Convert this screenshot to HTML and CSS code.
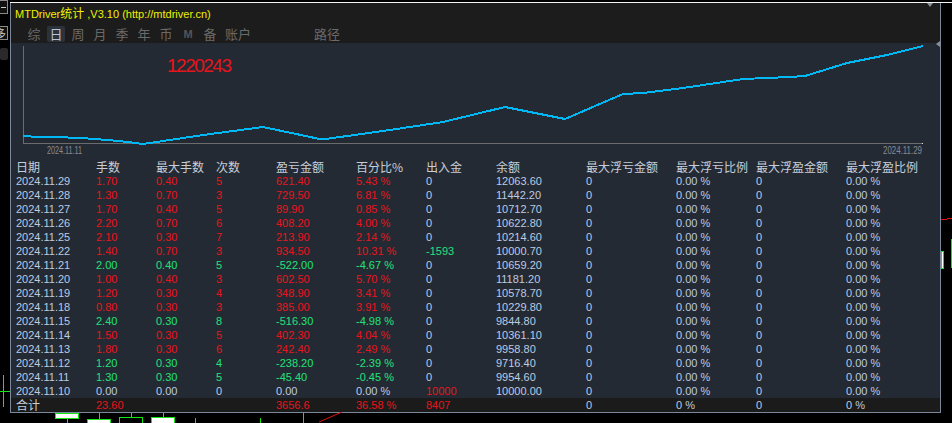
FILE: index.html
```html
<!DOCTYPE html>
<html>
<head>
<meta charset="utf-8">
<link rel="stylesheet" href="styles.css">
</head>
<body>
<div class="topline"></div>
<div class="panel">
  <div class="titlebar">
    <div class="title">MTDriver<span class="title-cjk">统计</span> ,V3.10 (http://mtdriver.cn)</div>
    <div class="tabs">
      <span class="tab">综</span><span class="tab active">日</span><span class="tab">周</span><span class="tab">月</span><span class="tab">季</span><span class="tab">年</span><span class="tab">币</span><span class="tab tab-m">M</span><span class="tab">备</span><span class="tab tab-wide">账户</span><span class="tab tab-wide tab-path">路径</span>
    </div>
  </div>
  <div class="content">
    <svg class="chart" width="929" height="117" viewBox="0 0 929 117">
      <line x1="12.5" y1="3" x2="12.5" y2="100" stroke="#6c6c6c" stroke-width="1"/>
      <line x1="12" y1="100.5" x2="912" y2="100.5" stroke="#6c6c6c" stroke-width="1"/>
      <rect x="911" y="100" width="1" height="1" fill="#e0e0e0"/>
      <text x="156" y="29" class="chart-num">1220243</text>
      <polyline fill="none" stroke="#00b8f4" stroke-width="2" stroke-linejoin="round"
        points="12,93 27,94 57,94.5 77,95.5 97,97 117,99 132,101 192,92 252,84 311,96.5 372,88 432,79 494,64 554,76 612,51 632,50 672,45 732,36 779,34 794,33 836,20 876,12 912,3"/>
      <text x="36" y="111" class="chart-date" textLength="35" lengthAdjust="spacingAndGlyphs">2024.11.11</text>
      <text x="872" y="111" class="chart-date" textLength="39" lengthAdjust="spacingAndGlyphs">2024.11.29</text>
    </svg>
    <div class="table">
      <div class="row head"><span>日期</span><span>手数</span><span>最大手数</span><span>次数</span><span>盈亏金额</span><span>百分比%</span><span>出入金</span><span>余额</span><span>最大浮亏金额</span><span>最大浮亏比例</span><span>最大浮盈金额</span><span>最大浮盈比例</span></div>
      <div class="row"><span>2024.11.29</span><span class="r">1.70</span><span class="r">0.40</span><span class="r">5</span><span class="r">621.40</span><span class="r">5.43 %</span><span>0</span><span>12063.60</span><span>0</span><span>0.00 %</span><span>0</span><span>0.00 %</span></div>
      <div class="row"><span>2024.11.28</span><span class="r">1.30</span><span class="r">0.70</span><span class="r">3</span><span class="r">729.50</span><span class="r">6.81 %</span><span>0</span><span>11442.20</span><span>0</span><span>0.00 %</span><span>0</span><span>0.00 %</span></div>
      <div class="row"><span>2024.11.27</span><span class="r">1.70</span><span class="r">0.40</span><span class="r">5</span><span class="r">89.90</span><span class="r">0.85 %</span><span>0</span><span>10712.70</span><span>0</span><span>0.00 %</span><span>0</span><span>0.00 %</span></div>
      <div class="row"><span>2024.11.26</span><span class="r">2.20</span><span class="r">0.70</span><span class="r">6</span><span class="r">408.20</span><span class="r">4.00 %</span><span>0</span><span>10622.80</span><span>0</span><span>0.00 %</span><span>0</span><span>0.00 %</span></div>
      <div class="row"><span>2024.11.25</span><span class="r">2.10</span><span class="r">0.30</span><span class="r">7</span><span class="r">213.90</span><span class="r">2.14 %</span><span>0</span><span>10214.60</span><span>0</span><span>0.00 %</span><span>0</span><span>0.00 %</span></div>
      <div class="row"><span>2024.11.22</span><span class="r">1.40</span><span class="r">0.70</span><span class="r">3</span><span class="r">934.50</span><span class="r">10.31 %</span><span class="g">-1593</span><span>10000.70</span><span>0</span><span>0.00 %</span><span>0</span><span>0.00 %</span></div>
      <div class="row"><span>2024.11.21</span><span class="g">2.00</span><span class="g">0.40</span><span class="g">5</span><span class="g">-522.00</span><span class="g">-4.67 %</span><span>0</span><span>10659.20</span><span>0</span><span>0.00 %</span><span>0</span><span>0.00 %</span></div>
      <div class="row"><span>2024.11.20</span><span class="r">1.00</span><span class="r">0.40</span><span class="r">3</span><span class="r">602.50</span><span class="r">5.70 %</span><span>0</span><span>11181.20</span><span>0</span><span>0.00 %</span><span>0</span><span>0.00 %</span></div>
      <div class="row"><span>2024.11.19</span><span class="r">1.20</span><span class="r">0.30</span><span class="r">4</span><span class="r">348.90</span><span class="r">3.41 %</span><span>0</span><span>10578.70</span><span>0</span><span>0.00 %</span><span>0</span><span>0.00 %</span></div>
      <div class="row"><span>2024.11.18</span><span class="r">0.80</span><span class="r">0.30</span><span class="r">3</span><span class="r">385.00</span><span class="r">3.91 %</span><span>0</span><span>10229.80</span><span>0</span><span>0.00 %</span><span>0</span><span>0.00 %</span></div>
      <div class="row"><span>2024.11.15</span><span class="g">2.40</span><span class="g">0.30</span><span class="g">8</span><span class="g">-516.30</span><span class="g">-4.98 %</span><span>0</span><span>9844.80</span><span>0</span><span>0.00 %</span><span>0</span><span>0.00 %</span></div>
      <div class="row"><span>2024.11.14</span><span class="r">1.50</span><span class="r">0.30</span><span class="r">5</span><span class="r">402.30</span><span class="r">4.04 %</span><span>0</span><span>10361.10</span><span>0</span><span>0.00 %</span><span>0</span><span>0.00 %</span></div>
      <div class="row"><span>2024.11.13</span><span class="r">1.80</span><span class="r">0.30</span><span class="r">6</span><span class="r">242.40</span><span class="r">2.49 %</span><span>0</span><span>9958.80</span><span>0</span><span>0.00 %</span><span>0</span><span>0.00 %</span></div>
      <div class="row"><span>2024.11.12</span><span class="g">1.20</span><span class="g">0.30</span><span class="g">4</span><span class="g">-238.20</span><span class="g">-2.39 %</span><span>0</span><span>9716.40</span><span>0</span><span>0.00 %</span><span>0</span><span>0.00 %</span></div>
      <div class="row"><span>2024.11.11</span><span class="g">1.30</span><span class="g">0.30</span><span class="g">5</span><span class="g">-45.40</span><span class="g">-0.45 %</span><span>0</span><span>9954.60</span><span>0</span><span>0.00 %</span><span>0</span><span>0.00 %</span></div>
      <div class="row"><span>2024.11.10</span><span>0.00</span><span>0.00</span><span>0</span><span>0.00</span><span>0.00 %</span><span class="r">10000</span><span>10000.00</span><span>0</span><span>0.00 %</span><span>0</span><span>0.00 %</span></div>
      <div class="row total"><span class="total-label">合计</span><span class="r">23.60</span><span></span><span></span><span class="r">3656.6</span><span class="r">36.58 %</span><span class="r">8407</span><span></span><span>0</span><span>0 %</span><span>0</span><span>0 %</span></div>
    </div>
  </div>
  <span class="tri-down"></span>
  <span class="tri-left"></span>
</div>

<div class="side-btn side-btn-1"><span class="dash"></span></div>
<div class="side-btn side-btn-2">多</div>
<div class="side-icon"></div>

<div class="bgc green-v" style="left:3px;top:375px;height:32px"></div>
<div class="bgc green-h" style="left:0;top:391px;width:10px"></div>
<div class="bgc red-h" style="left:941px;top:219px;width:6px"></div>
<div class="bgc red-h" style="left:947px;top:218px;width:5px"></div>
<div class="bgc candle" style="left:941px;top:251px;width:3px;height:18px"></div>
<div class="bgc green-v" style="left:951px;top:239px;height:29px"></div>

<div class="bgc candle" style="left:55px;top:413px;width:24px;height:6px"></div>
<div class="bgc green-v" style="left:67px;top:419px;height:4px"></div>
<div class="bgc green-v" style="left:99px;top:413px;height:6px"></div>
<div class="bgc candle" style="left:87px;top:419px;width:24px;height:6px"></div>
<div class="bgc green-v" style="left:131px;top:413px;height:4px"></div>
<div class="bgc candle-open" style="left:119px;top:417px;width:24px;height:8px"></div>
<div class="bgc green-v" style="left:163px;top:413px;height:4px"></div>
<div class="bgc candle" style="left:151px;top:417px;width:24px;height:8px"></div>
<div class="bgc green-v" style="left:195px;top:418px;height:5px"></div>
<div class="bgc green-v" style="left:260px;top:418px;height:5px"></div>
<div class="bgc green-v" style="left:303px;top:413px;height:10px"></div>
<svg class="bgc red-diag" width="30" height="12" viewBox="0 0 30 12"><line x1="0" y1="10" x2="23" y2="0" stroke="#e01010" stroke-width="1"/></svg>
</body>
</html>
```

FILE: styles.css
```css
* { box-sizing: border-box; }

html, body {
  margin: 0;
  padding: 0;
}

body {
  width: 952px;
  height: 423px;
  background: #000;
  overflow: hidden;
  position: relative;
  padding-top: 2px;
  font-family: "Liberation Sans", Arial, "Noto Sans CJK SC", sans-serif;
}

.topline {
  height: 1px;
  margin-left: 10px;
  background: #f4f4f4;
}

.panel {
  position: relative;
  margin-left: 10px;
  width: 931px;
  height: 410px;
  border: 1px solid #7a889c;
  border-top: none;
  background: #242a33;
  display: flex;
  flex-direction: column;
}

.titlebar {
  height: 40px;
  background: #1c1c1c;
  padding: 3px 0 0 4px;
}

.title {
  height: 14px;
  line-height: 14px;
  font-size: 11px;
  color: #f0f000;
  white-space: nowrap;
}

.title-cjk {
  font-family: "Noto Sans CJK SC", sans-serif;
  font-size: 12px;
}

.tabs {
  margin-top: 6px;
  margin-left: 10px;
  display: flex;
  gap: 4px;
  height: 16px;
}

.tab {
  width: 18px;
  height: 16px;
  line-height: 16px;
  text-align: center;
  font-family: "Noto Sans CJK SC", sans-serif;
  font-size: 13px;
  color: #6a6a6a;
  border-radius: 2px;
}

.tab.active {
  background: #2b323c;
  color: #b9c4d4;
}

.tab-m {
  font-family: "Liberation Sans", sans-serif;
  font-size: 11px;
  font-weight: bold;
  color: #555;
}

.tab-wide {
  width: 30px;
}

.tab-path {
  margin-left: 55px;
}

.content {
  flex: 1;
  display: flex;
  flex-direction: column;
}

.chart {
  display: block;
  shape-rendering: crispEdges;
}

.chart-num {
  font-family: "Liberation Sans", sans-serif;
  font-size: 19px;
  letter-spacing: -1.5px;
  fill: #e8141c;
}

.chart-date {
  font-family: "Liberation Sans", sans-serif;
  font-size: 10px;
  fill: #858b95;
}

.table {
  display: flex;
  flex-direction: column;
}

.row {
  display: grid;
  grid-template-columns: 80px 60px 60px 60px 80px 70px 70px 90px 90px 80px 90px 1fr;
  padding-left: 5px;
  height: 14px;
  line-height: 14px;
  font-size: 11px;
  color: #bccbe2;
  white-space: nowrap;
}

.row.head {
  font-family: "Noto Sans CJK SC", sans-serif;
  font-size: 12px;
  color: #c8ced8;
}

.r { color: #e8141c; }
.g { color: #1fe27a; }

.row.total {
  background: #1b1b1b;
  height: 14px;
}

.total-label {
  font-family: "Noto Sans CJK SC", sans-serif;
  font-size: 12px;
  color: #c8ced8;
}

.tri-down {
  position: absolute;
  right: 7px;
  top: 0;
  width: 0;
  height: 0;
  border-left: 3px solid transparent;
  border-right: 3px solid transparent;
  border-top: 4px solid #8a9099;
}

.tri-left {
  position: absolute;
  right: 0;
  top: 38px;
  width: 0;
  height: 0;
  border-top: 3px solid transparent;
  border-bottom: 3px solid transparent;
  border-right: 4px solid #8a9099;
}

.side-btn {
  position: absolute;
  left: -10px;
  width: 18px;
  height: 14px;
  border: 1px solid #8a8a8a;
  background: #101010;
  color: #c8c8c8;
  font-family: "Noto Sans CJK SC", sans-serif;
  font-size: 11px;
  line-height: 12px;
  text-align: right;
  padding-right: 1px;
}

.side-btn-1 { top: 0; }
.side-btn-2 { top: 26px; }

.dash {
  position: absolute;
  right: 1px;
  top: 6px;
  width: 5px;
  height: 1px;
  background: #c8c8c8;
}

.side-icon {
  position: absolute;
  left: 0;
  top: 48px;
  width: 8px;
  height: 12px;
  background: #2a2a2a;
  border-radius: 2px;
}

.bgc {
  position: absolute;
}

.green-v {
  width: 1px;
  background: #14e614;
}

.green-h {
  height: 1px;
  background: #14e614;
}

.red-h {
  height: 1px;
  background: #e01010;
}

.candle {
  background: #fff;
  border: 1px solid #14e614;
}

.candle-open {
  background: #000;
  border: 1px solid #14e614;
}

.red-diag {
  left: 319px;
  top: 412px;
}
```
